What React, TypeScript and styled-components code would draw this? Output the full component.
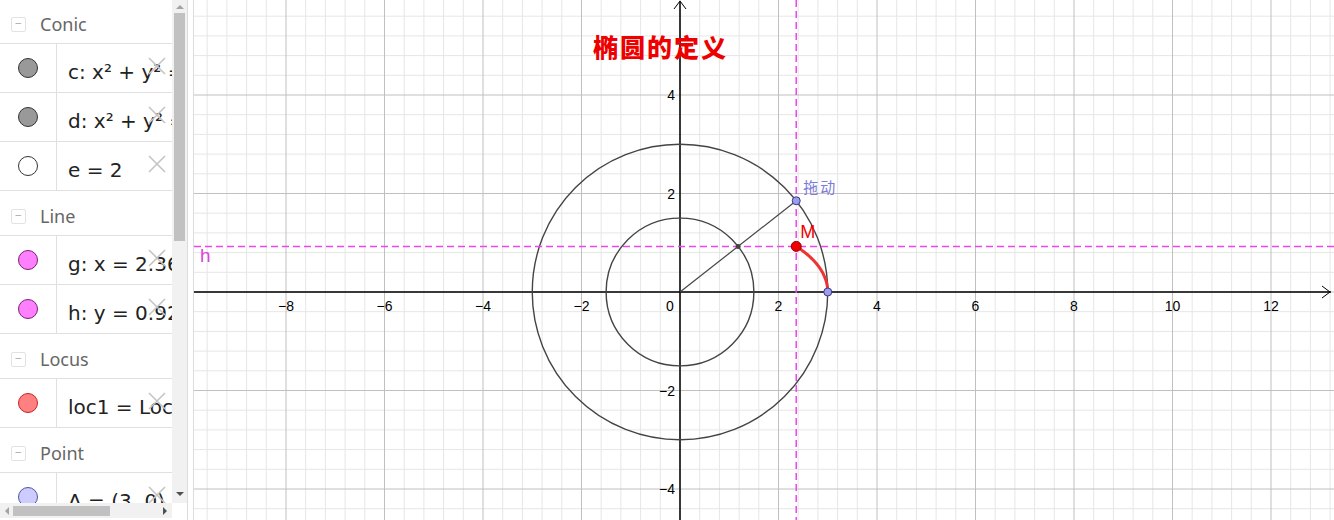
import React from 'react';
import styled, { createGlobalStyle } from 'styled-components';

interface AlgebraItem {
  label: string;
  fill: string;
  stroke: string;
}

interface AlgebraGroup {
  title: string;
  items: AlgebraItem[];
}

const GROUPS: AlgebraGroup[] = [
  {
    title: 'Conic',
    items: [
      { label: 'c: x² + y² = 9', fill: '#999999', stroke: '#333333' },
      { label: 'd: x² + y² = 2.25', fill: '#999999', stroke: '#333333' },
      { label: 'e = 2', fill: '#ffffff', stroke: '#333333' },
    ],
  },
  {
    title: 'Line',
    items: [
      { label: 'g: x = 2.36', fill: '#ff80ff', stroke: '#7a1f7a' },
      { label: 'h: y = 0.92', fill: '#ff80ff', stroke: '#7a1f7a' },
    ],
  },
  {
    title: 'Locus',
    items: [{ label: 'loc1 = Locus(M, P)', fill: '#ff8080', stroke: '#cc2020' }],
  },
  {
    title: 'Point',
    items: [{ label: 'A = (3, 0)', fill: '#ccccff', stroke: '#5050b0' }],
  },
];

// graphics view geometry
const W = 1140;
const H = 520;
const OX = 486;
const OY = 292;
const U = 49.25;
const THETA = Math.acos(2.36 / 3);

const px = (x: number) => OX + x * U;
const py = (y: number) => OY - y * U;

function buildGrid() {
  const step = 0.4 * U;
  const vertical: { x: number; major: boolean }[] = [];
  const horizontal: { y: number; major: boolean }[] = [];
  for (let k = Math.ceil(-OX / step); k * step + OX <= W; k++) {
    vertical.push({ x: OX + k * step, major: k % 5 === 0 });
  }
  for (let k = Math.ceil(-OY / step); k * step + OY <= H; k++) {
    horizontal.push({ y: OY + k * step, major: k % 5 === 0 });
  }
  return { vertical, horizontal };
}

function locusPath(): string {
  const pts: string[] = [];
  for (let i = 0; i <= 30; i++) {
    const t = (THETA * i) / 30;
    pts.push(`${px(3 * Math.cos(t)).toFixed(2)},${py(1.5 * Math.sin(t)).toFixed(2)}`);
  }
  return `M${pts.join(' L')}`;
}

function GraphicsView(): JSX.Element {
  const { vertical, horizontal } = buildGrid();
  const xTicks = [-8, -6, -4, -2, 2, 4, 6, 8, 10, 12];
  const yTicks = [4, 2, -2, -4];
  const P = { x: px(3 * Math.cos(THETA)), y: py(3 * Math.sin(THETA)) };
  const Q = { x: px(1.5 * Math.cos(THETA)), y: py(1.5 * Math.sin(THETA)) };
  const M = { x: P.x, y: Q.y };

  return (
    <Canvas viewBox={`0 0 ${W} ${H}`} width={W} height={H}>
      {vertical.filter((l) => !l.major).map((l) => (
        <line key={`vm${l.x}`} x1={l.x} y1={0} x2={l.x} y2={H} stroke="#e6e6e6" />
      ))}
      {horizontal.filter((l) => !l.major).map((l) => (
        <line key={`hm${l.y}`} x1={0} y1={l.y} x2={W} y2={l.y} stroke="#e6e6e6" />
      ))}
      {vertical.filter((l) => l.major).map((l) => (
        <line key={`vM${l.x}`} x1={l.x} y1={0} x2={l.x} y2={H} stroke="#c0c0c0" />
      ))}
      {horizontal.filter((l) => l.major).map((l) => (
        <line key={`hM${l.y}`} x1={0} y1={l.y} x2={W} y2={l.y} stroke="#c0c0c0" />
      ))}

      {/* axes */}
      <line x1={0} y1={OY} x2={W - 3} y2={OY} stroke="#000" strokeWidth={1.5} />
      <line x1={OX} y1={2} x2={OX} y2={H} stroke="#000" strokeWidth={1.5} />
      <polyline points={`${W - 12},${OY - 6} ${W - 4},${OY} ${W - 12},${OY + 6}`} fill="none" stroke="#000" />
      <polyline points={`${OX - 6},9 ${OX},1 ${OX + 6},9`} fill="none" stroke="#000" />

      {xTicks.map((v) => (
        <AxisLabel key={`x${v}`} x={px(v)} y={OY + 19} textAnchor="middle">
          {v < 0 ? `−${-v}` : v}
        </AxisLabel>
      ))}
      <AxisLabel x={OX - 10} y={OY + 19} textAnchor="middle">0</AxisLabel>
      {yTicks.map((v) => (
        <AxisLabel key={`y${v}`} x={OX - 5} y={py(v) + 5} textAnchor="end">
          {v < 0 ? `−${-v}` : v}
        </AxisLabel>
      ))}

      {/* conics */}
      <circle cx={OX} cy={OY} r={3 * U} fill="none" stroke="#444" strokeWidth={1.4} />
      <circle cx={OX} cy={OY} r={1.5 * U} fill="none" stroke="#444" strokeWidth={1.4} />
      <line x1={OX} y1={OY} x2={P.x} y2={P.y} stroke="#444" strokeWidth={1.2} />

      {/* lines g and h */}
      <line x1={P.x} y1={0} x2={P.x} y2={H} stroke="#ee44ee" strokeWidth={1.5} strokeDasharray="7 4" />
      <line x1={0} y1={M.y} x2={W} y2={M.y} stroke="#ee44ee" strokeWidth={1.5} strokeDasharray="7 4" />

      <path d={locusPath()} fill="none" stroke="#ee3333" strokeWidth={3} strokeLinecap="round" />

      {/* points */}
      <circle cx={Q.x} cy={Q.y} r={2.5} fill="#444" />
      <circle cx={P.x} cy={P.y} r={4} fill="#9c9cf0" stroke="#3a3a80" strokeWidth={1} />
      <circle cx={px(3)} cy={OY} r={4} fill="#9c9cf0" stroke="#3a3a80" strokeWidth={1} />
      <circle cx={M.x} cy={M.y} r={5} fill="#ee0000" stroke="#990000" strokeWidth={1} />

      <Title x={399} y={57}>椭圆的定义</Title>
      <DragLabel x={P.x + 7} y={P.y - 8}>拖动</DragLabel>
      <PointLabel x={M.x + 4} y={M.y - 8}>M</PointLabel>
      <LineLabel x={6} y={M.y + 16}>h</LineLabel>
    </Canvas>
  );
}

function DeleteIcon(): JSX.Element {
  return (
    <DeleteButton>
      <svg width="18" height="18" viewBox="0 0 18 18">
        <path d="M1 1 L17 17 M17 1 L1 17" stroke="#c4c4c4" strokeWidth="1.6" fill="none" />
      </svg>
    </DeleteButton>
  );
}

function App(): JSX.Element {
  return (
    <>
      <GlobalStyle />
      <Page>
        <AlgebraPanel>
          <AlgebraMain>
            <AlgebraList>
              {GROUPS.map((group) => (
                <React.Fragment key={group.title}>
                  <GroupHeader>
                    <CollapseBox>−</CollapseBox>
                    <GroupTitle>{group.title}</GroupTitle>
                  </GroupHeader>
                  {group.items.map((item) => (
                    <ItemRow key={item.label}>
                      <MarbleCell>
                        <Marble $fill={item.fill} $stroke={item.stroke} />
                      </MarbleCell>
                      <ItemContent>
                        <ItemText>{item.label}</ItemText>
                        <DeleteIcon />
                      </ItemContent>
                    </ItemRow>
                  ))}
                </React.Fragment>
              ))}
            </AlgebraList>
            <VScrollbar>
              <ArrowUp />
              <VThumb />
              <ArrowDown />
            </VScrollbar>
          </AlgebraMain>
          <HScrollRow>
            <HScrollbar>
              <ArrowLeft />
              <HThumb />
              <ArrowRight />
            </HScrollbar>
            <ScrollCorner />
          </HScrollRow>
        </AlgebraPanel>
        <Splitter />
        <GraphicsPanel>
          <GraphicsView />
        </GraphicsPanel>
      </Page>
    </>
  );
}

export default App;

const GlobalStyle = createGlobalStyle`
  html, body {
    margin: 0;
    padding: 0;
    background: #ffffff;
  }
  body {
    font-family: "Noto Sans", "Liberation Sans", sans-serif;
  }
`;

const Page = styled.div`
  display: flex;
  width: 1334px;
  height: 520px;
  overflow: hidden;
  background: #ffffff;
`;

const AlgebraPanel = styled.aside`
  display: flex;
  flex-direction: column;
  width: 187px;
  height: 520px;
  border-right: 1px solid #dcdcdc;
`;

const AlgebraMain = styled.div`
  display: flex;
  height: 503px;
`;

const AlgebraList = styled.div`
  width: 172px;
  overflow: hidden;
  margin-top: -1px;
`;

const GroupHeader = styled.div`
  display: flex;
  align-items: center;
  gap: 14px;
  height: 45px;
  padding: 6px 0 0 11px;
  box-sizing: border-box;
  border-bottom: 1px solid #e0e0e0;
`;

const CollapseBox = styled.span`
  display: flex;
  align-items: center;
  justify-content: center;
  width: 13px;
  height: 13px;
  border: 1px solid #e2e2e2;
  border-radius: 2px;
  color: #b0b0b0;
  font-size: 12px;
  line-height: 1;
`;

const GroupTitle = styled.span`
  font-size: 18px;
  color: #666666;
`;

const ItemRow = styled.div`
  display: flex;
  height: 49px;
  box-sizing: border-box;
  border-bottom: 1px solid #e0e0e0;
`;

const MarbleCell = styled.div`
  display: flex;
  align-items: center;
  justify-content: center;
  width: 56px;
  flex-shrink: 0;
  border-right: 1px solid #e0e0e0;
`;

const Marble = styled.span<{ $fill: string; $stroke: string }>`
  width: 18px;
  height: 18px;
  border-radius: 50%;
  background: ${(p) => p.$fill};
  border: 1px solid ${(p) => p.$stroke};
`;

const ItemContent = styled.div`
  position: relative;
  flex: 1;
  min-width: 0;
  padding: 16px 0 0 11px;
  overflow: hidden;
`;

const ItemText = styled.div`
  font-family: "DejaVu Sans", "Noto Sans", sans-serif;
  font-size: 20px;
  line-height: 24px;
  color: #222222;
  white-space: nowrap;
`;

const DeleteButton = styled.span`
  position: absolute;
  top: 13px;
  right: 6px;
  display: flex;
  background: transparent;
`;

const VScrollbar = styled.div`
  display: flex;
  flex-direction: column;
  align-items: center;
  width: 15px;
  background: #f1f1f1;
`;

const VThumb = styled.div`
  width: 11px;
  height: 228px;
  margin-top: 4px;
  background: #c1c1c1;
`;

const ArrowUp = styled.span`
  margin-top: 5px;
  border-left: 4px solid transparent;
  border-right: 4px solid transparent;
  border-bottom: 4px solid #a3a3a3;
`;

const ArrowDown = styled.span`
  margin-top: auto;
  margin-bottom: 7px;
  border-left: 4px solid transparent;
  border-right: 4px solid transparent;
  border-top: 4px solid #505050;
`;

const HScrollRow = styled.div`
  display: flex;
  height: 15px;
`;

const HScrollbar = styled.div`
  display: flex;
  align-items: center;
  width: 172px;
  background: #f1f1f1;
`;

const HThumb = styled.div`
  width: 97px;
  height: 10px;
  margin-left: 4px;
  background: #c1c1c1;
`;

const ArrowLeft = styled.span`
  margin-left: 5px;
  border-top: 4px solid transparent;
  border-bottom: 4px solid transparent;
  border-right: 4px solid #a3a3a3;
`;

const ArrowRight = styled.span`
  margin-left: auto;
  margin-right: 5px;
  border-top: 4px solid transparent;
  border-bottom: 4px solid transparent;
  border-left: 4px solid #505050;
`;

const ScrollCorner = styled.div`
  flex: 1;
  background: #ffffff;
`;

const Splitter = styled.div`
  width: 5px;
  background: #ffffff;
`;

const GraphicsPanel = styled.main`
  flex: 1;
  border-left: 1px solid #dcdcdc;
  overflow: hidden;
`;

const Canvas = styled.svg`
  display: block;
`;

const AxisLabel = styled.text`
  font-family: "Liberation Sans", Arial, sans-serif;
  font-size: 14px;
  fill: #000000;
`;

const Title = styled.text`
  font-family: "Noto Sans CJK SC", sans-serif;
  font-weight: 900;
  font-size: 25px;
  letter-spacing: 2px;
  fill: #ee0000;
`;

const DragLabel = styled.text`
  font-family: "Noto Sans CJK SC", sans-serif;
  font-size: 15px;
  letter-spacing: 2px;
  fill: #7c7cd8;
`;

const PointLabel = styled.text`
  font-family: "Liberation Sans", Arial, sans-serif;
  font-size: 18px;
  fill: #ee0000;
`;

const LineLabel = styled.text`
  font-family: "Liberation Sans", Arial, sans-serif;
  font-size: 19px;
  fill: #dd44dd;
`;
